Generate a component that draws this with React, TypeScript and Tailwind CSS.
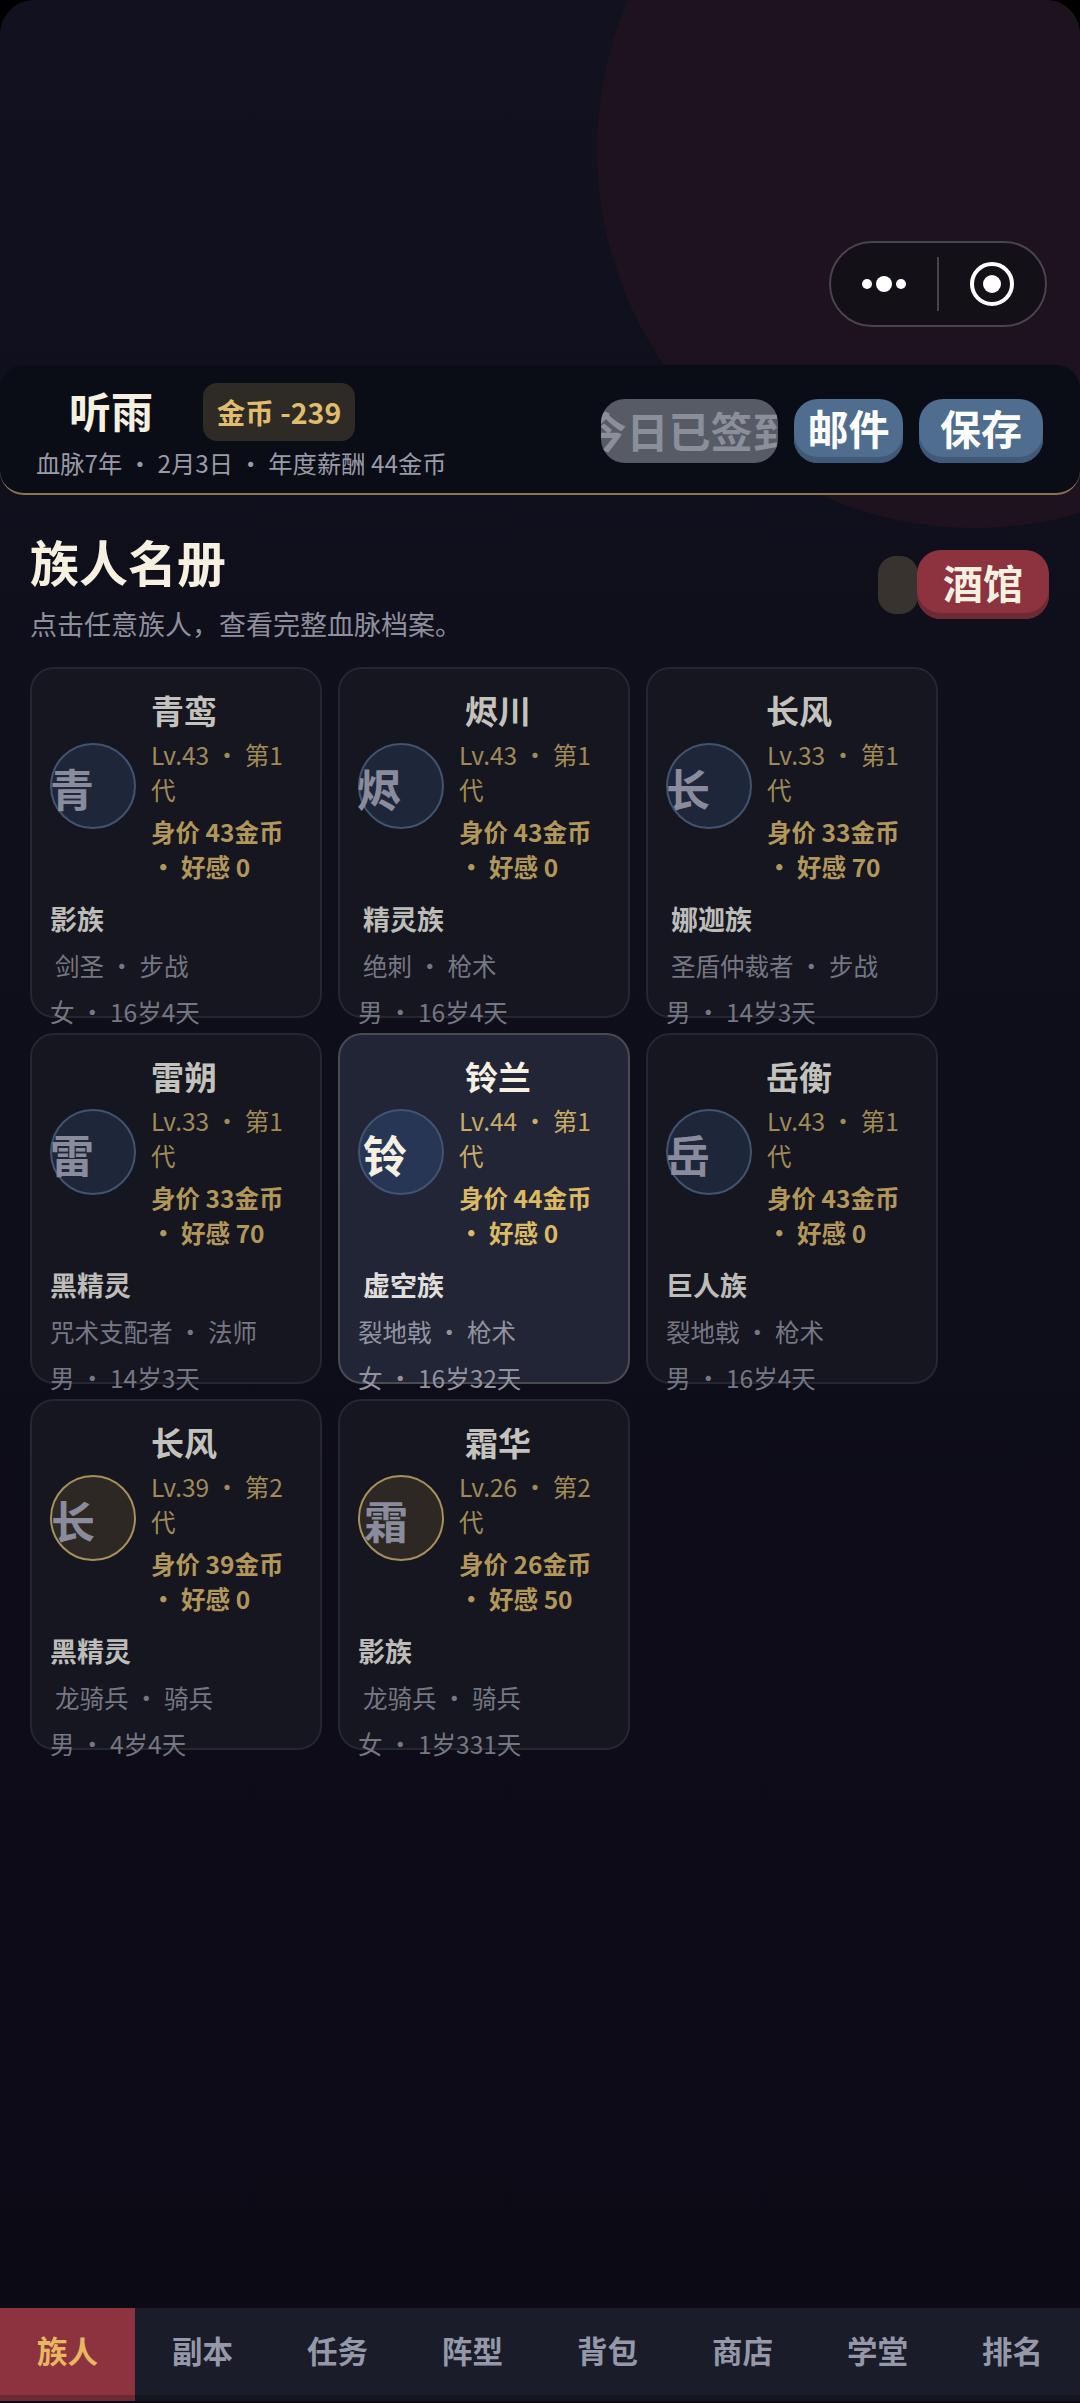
const members = [
  { name: "青鸾", nameX: 0, ch: "青", chX: 0, lv: 43, gen: 1, worth: 43, fav: 0, race: "影族", raceX: 0, job: "剑圣 · 步战", jobX: 5, bio: "女 · 16岁4天" },
  { name: "烬川", nameX: 6, ch: "烬", chX: -1, lv: 43, gen: 1, worth: 43, fav: 0, race: "精灵族", raceX: 5, job: "绝刺 · 枪术", jobX: 5, bio: "男 · 16岁4天" },
  { name: "长风", nameX: -1, ch: "长", chX: 0, lv: 33, gen: 1, worth: 33, fav: 70, race: "娜迦族", raceX: 5, job: "圣盾仲裁者 · 步战", jobX: 5, bio: "男 · 14岁3天" },
  { name: "雷朔", nameX: 0, ch: "雷", chX: 0, lv: 33, gen: 1, worth: 33, fav: 70, race: "黑精灵", raceX: 0, job: "咒术支配者 · 法师", jobX: 0, bio: "男 · 14岁3天" },
  { name: "铃兰", nameX: 6, ch: "铃", chX: 1, lv: 44, gen: 1, worth: 44, fav: 0, race: "虚空族", raceX: 5, job: "裂地戟 · 枪术", jobX: 0, bio: "女 · 16岁32天", active: true },
  { name: "岳衡", nameX: -1, ch: "岳", chX: 0, lv: 43, gen: 1, worth: 43, fav: 0, race: "巨人族", raceX: 0, job: "裂地戟 · 枪术", jobX: 0, bio: "男 · 16岁4天" },
  { name: "长风", nameX: 0, ch: "长", chX: 1, lv: 39, gen: 2, worth: 39, fav: 0, race: "黑精灵", raceX: 0, job: "龙骑兵 · 骑兵", jobX: 5, bio: "男 · 4岁4天" },
  { name: "霜华", nameX: 6, ch: "霜", chX: 6, lv: 26, gen: 2, worth: 26, fav: 50, race: "影族", raceX: 0, job: "龙骑兵 · 骑兵", jobX: 5, bio: "女 · 1岁331天" },
];

const tabs = ["族人", "副本", "任务", "阵型", "背包", "商店", "学堂", "排名"];

function MemberCard({ m }: { m: (typeof members)[number] }) {
  const gold = m.gen === 2;
  return (
    <div
      className={
        "h-[351px] rounded-[24px] border-2 pt-[17px] pl-[18px] " +
        (m.active ? "border-[#4a4a50] bg-[#212536]" : "border-[#25262f] bg-[#15161f]")
      }
    >
      <div
        className={"ml-[70px] w-[128px] text-center text-[33px] leading-[48px] font-bold " + (m.active ? "text-[#f5f0e0]" : "text-[#c4c2bc]")}
        style={{ transform: `translateX(${m.nameX}px)` }}
      >
        {m.name}
      </div>
      <div className="mt-[3px] flex">
        <div
          className={
            "mt-[6px] flex h-[86px] w-[86px] shrink-0 items-center rounded-full border-2 text-[44px] font-bold " +
            (gold ? "border-[#a8905a] bg-[#2d2823]" : "border-[#43536f] bg-[#1e2639]") +
            (m.active ? " bg-[#283656] pl-[4px] text-[#f5f0e0]" : " text-[#8a8b9c]")
          }
        >
          <span className="-ml-[2px] pt-[4px]" style={{ transform: `translateX(${m.chX}px)` }}>
            {m.ch}
          </span>
        </div>
        <div className="ml-[15px] w-[150px]">
          <div className={"text-[24.5px] leading-[35px] " + (m.active ? "text-[#c9ab66]" : "text-[#a08a58]")}>
            <span className="whitespace-nowrap">Lv.{m.lv} · 第{m.gen}</span>
            <br />代
          </div>
          <div className={"mt-[7px] text-[24.5px] leading-[35px] font-bold whitespace-nowrap " + (m.active ? "text-[#dcb964]" : "text-[#b2965a]")}>
            身价 {m.worth}金币
            <br />
            <span>· 好感 {m.fav}</span>
          </div>
        </div>
      </div>
      <div
        className={"mt-[17px] text-[27px] leading-[36px] font-bold " + (m.active ? "text-[#e0ded8]" : "text-[#bdbcb8]")}
        style={{ paddingLeft: m.raceX }}
      >
        {m.race}
      </div>
      <div
        className={"mt-[11px] text-[24.5px] leading-[36px] whitespace-nowrap " + (m.active ? "text-[#92939f]" : "text-[#767783]")}
        style={{ paddingLeft: m.jobX }}
      >
        {m.job}
      </div>
      <div className={"mt-[10px] text-[24.5px] leading-[36px] whitespace-nowrap " + (m.active ? "text-[#92939f]" : "text-[#767783]")}>
        {m.bio}
      </div>
    </div>
  );
}

export default function App() {
  return (
    <div className="h-[2403px] w-[1080px] bg-black font-['Noto_Sans_CJK_SC','Noto_Sans',sans-serif]">
      <div className="relative flex h-full flex-col overflow-hidden rounded-t-[34px] bg-gradient-to-b from-[#11111f] to-[#0b0a15]">
        {/* background circle */}
        <div className="absolute top-[-228px] left-[597px] h-[756px] w-[756px] rounded-full bg-[#1e121f]" />

        {/* wechat capsule */}
        <div className="absolute top-[241px] left-[829px] flex h-[86px] w-[218px] items-center rounded-full border-2 border-[#48434d] bg-[#131017]">
          <div className="flex w-[106px] items-center justify-center gap-[4px]">
            <span className="h-[10px] w-[10px] rounded-full bg-white" />
            <span className="h-[16px] w-[16px] rounded-full bg-white" />
            <span className="h-[10px] w-[10px] rounded-full bg-white" />
          </div>
          <div className="h-[54px] w-[2px] bg-[#48434d]" />
          <div className="flex flex-1 items-center justify-center">
            <div className="flex h-[44px] w-[44px] items-center justify-center rounded-full border-[4px] border-white">
              <span className="h-[18px] w-[18px] rounded-full bg-white" />
            </div>
          </div>
        </div>

        {/* player header */}
        <div className="relative mt-[365px] flex h-[130px] items-start justify-between rounded-[24px] border-b-2 border-[#8b7550] bg-[#0b0d16] pr-[36px] pl-[36px]">
          <div>
            <div className="mt-[18px] flex items-center">
              <div className="-mt-[4px] ml-[33px] text-[42px] leading-[58px] font-bold text-[#f5f0e0]">听雨</div>
              <div className="ml-[50px] flex h-[58px] w-[152px] items-center justify-center rounded-[14px] bg-[#2e2a26] text-[28.5px] font-bold whitespace-nowrap text-[#e0bd6d]">
                金币 -239
              </div>
            </div>
            <div className="mt-[4px] text-[24.3px] leading-[36px] whitespace-nowrap text-[#9a9aa8]">
              血脉7年 · 2月3日 · 年度薪酬 44金币
            </div>
          </div>
          <div className="mt-[34px] mr-[1px] flex gap-[16px]">
            <div className="flex h-[64px] w-[177px] items-center justify-center overflow-hidden rounded-[24px] bg-[#565b66] pb-[4px] text-[42px] font-bold whitespace-nowrap text-[#8b8f99]">
              今日已签到
            </div>
            <div className="flex h-[64px] w-[109px] items-center justify-center rounded-[24px] bg-[#4f6d8f] pb-[6px] text-[41px] font-bold text-white shadow-[inset_0_-6px_0_#3f5a78]">
              邮件
            </div>
            <div className="flex h-[64px] w-[124px] items-center justify-center rounded-[24px] bg-[#4f6d8f] pb-[6px] text-[41px] font-bold text-white shadow-[inset_0_-6px_0_#3f5a78]">
              保存
            </div>
          </div>
        </div>

        {/* roster title */}
        <div className="relative flex items-start justify-between pt-[31px] pr-[31px] pl-[30px]">
          <div>
            <div className="text-[49px] leading-[70px] font-bold text-[#f5f0e0]">族人名册</div>
            <div className="mt-[10px] text-[27px] leading-[36px] text-[#8f8f9c]">点击任意族人，查看完整血脉档案。</div>
          </div>
          <div className="mt-[24px] flex items-center">
            <div className="mr-[-1px] h-[58px] w-[40px] rounded-[18px] bg-[#38332e]" />
            <div className="flex h-[69px] w-[132px] items-center justify-center rounded-[24px] bg-[#8d3340] pb-[6px] text-[40px] font-bold text-[#f5f0e0] shadow-[inset_0_-6px_0_#6d2a34]">
              酒馆
            </div>
          </div>
        </div>

        {/* member cards */}
        <div className="relative mt-[25px] ml-[30px] grid w-[908px] grid-cols-3 gap-x-[16px] gap-y-[15px]">
          {members.map((m) => (
            <MemberCard key={m.name + m.lv} m={m} />
          ))}
        </div>

        {/* bottom tabs */}
        <div className="relative mt-auto mb-[2px] flex h-[93px] bg-[#1a1c2a] shadow-[inset_0_-6px_0_#14151f]">
          {tabs.map((t, i) => (
            <div
              key={t}
              className={
                "flex h-[93px] w-[135px] items-center justify-center pb-[8px] text-[30.5px] font-bold " +
                (i === 0 ? "bg-[#8d3340] text-[#e8b860] shadow-[inset_0_-6px_0_#6d2a34]" : "text-[#9598a8]")
              }
            >
              {t}
            </div>
          ))}
        </div>
      </div>
    </div>
  );
}
